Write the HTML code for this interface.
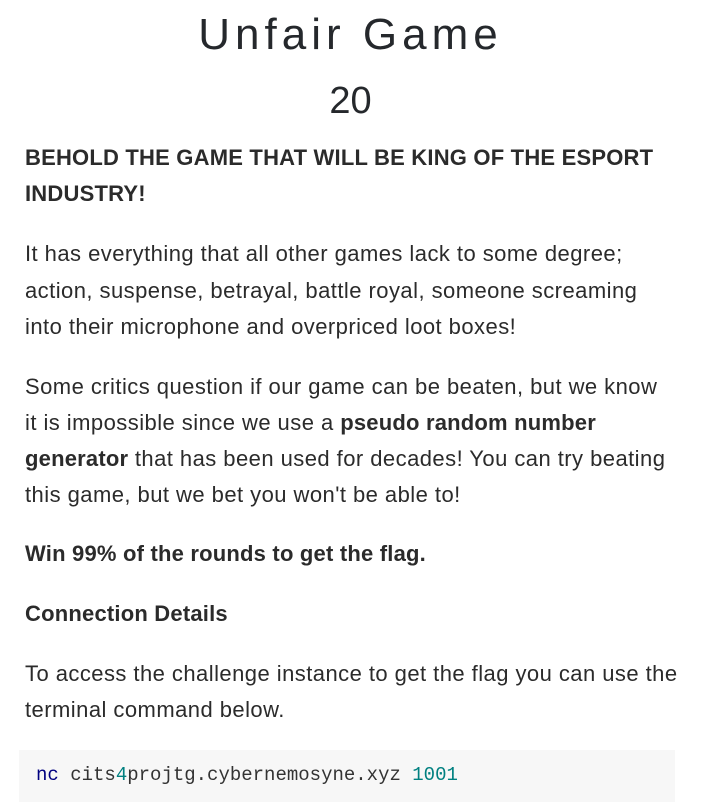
<!DOCTYPE html>
<html><head><style>
body{margin:0;background:#fff;color:#222;font-family:"Liberation Sans",sans-serif;}
.t{position:absolute;left:0;width:701px;text-align:center;font-weight:300;color:#25282c;}
.l{position:absolute;left:25px;white-space:nowrap;font-size:22px;letter-spacing:0.45px;color:#2b2b2b;}
.b{font-weight:bold;letter-spacing:0.2px;}
.l b{letter-spacing:0.2px;}
.code{position:absolute;left:19px;top:750px;width:656px;height:52px;background:#f7f7f7;}
.code span.c{position:absolute;left:36px;top:14px;font-family:"Liberation Mono",monospace;font-size:19px;color:#333;white-space:nowrap;}
.code span.c{left:17px;}
</style></head><body>
<div class="t" style="top:10px;font-size:44px;letter-spacing:5px;">Unfair Game</div>
<div class="t" style="top:80px;font-size:38px;">20</div>
<div class="l b" style="top:145px">BEHOLD THE GAME THAT WILL BE KING OF THE ESPORT</div>
<div class="l b" style="top:181px">INDUSTRY!</div>
<div class="l" style="top:241px">It has everything that all other games lack to some degree;</div>
<div class="l" style="top:278px">action, suspense, betrayal, battle royal, someone screaming</div>
<div class="l" style="top:314px">into their microphone and overpriced loot boxes!</div>
<div class="l" style="top:374px">Some critics question if our game can be beaten, but we know</div>
<div class="l" style="top:410px">it is impossible since we use a <b>pseudo random number</b></div>
<div class="l" style="top:446px"><b>generator</b> that has been used for decades! You can try beating</div>
<div class="l" style="top:482px">this game, but we bet you won't be able to!</div>
<div class="l b" style="top:541px">Win 99% of the rounds to get the flag.</div>
<div class="l b" style="top:601px">Connection Details</div>
<div class="l" style="top:661px">To access the challenge instance to get the flag you can use the</div>
<div class="l" style="top:697px">terminal command below.</div>
<div class="code"><span class="c"><span style="color:#000080">nc</span> cits<span style="color:#008080">4</span>projtg.cybernemosyne.xyz <span style="color:#008080">1001</span></span></div>
</body></html>
